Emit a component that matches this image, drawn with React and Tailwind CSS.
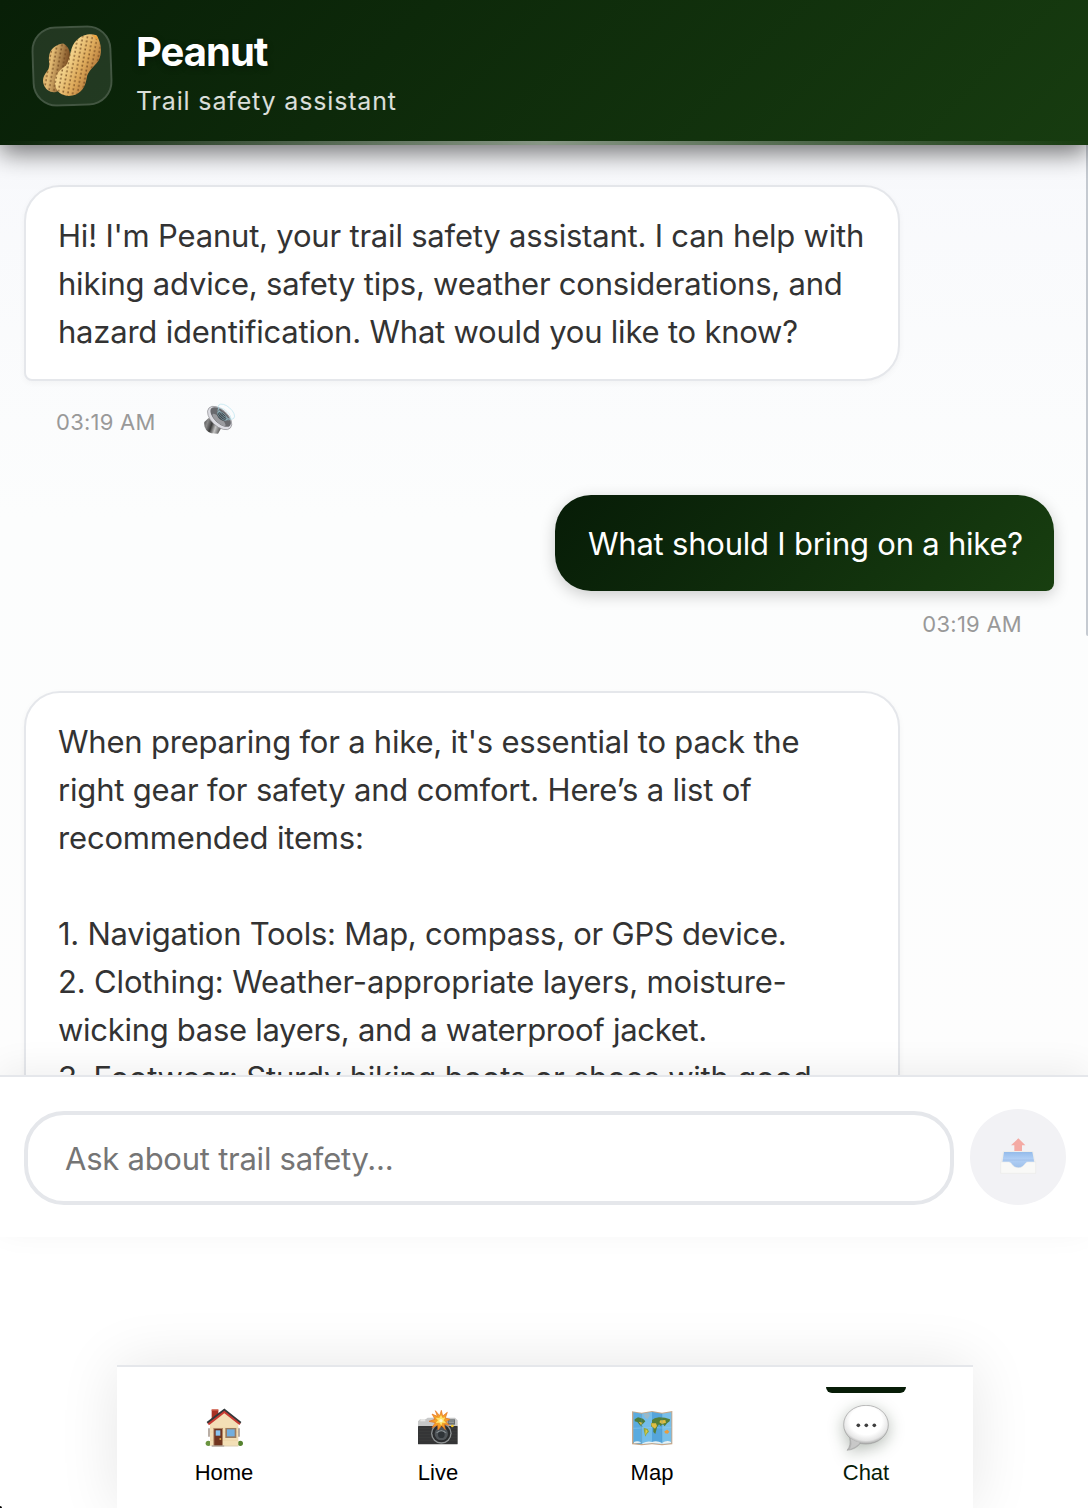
import React from "react";

function PeanutIcon() {
    return (
        <svg viewBox="36 33 240 240" className="w-full h-full">
            <defs>
                <linearGradient id="shell" x1="0" y1="0" x2="1" y2="0.7">
                    <stop offset="0" stopColor="#d9a95c" />
                    <stop offset="0.4" stopColor="#f2d189" />
                    <stop offset="0.65" stopColor="#dda95a" />
                    <stop offset="1" stopColor="#9c5c26" />
                </linearGradient>
                <linearGradient id="shellBack" x1="0" y1="0" x2="1" y2="0.4">
                    <stop offset="0" stopColor="#d0a05a" />
                    <stop offset="0.4" stopColor="#e3bb74" />
                    <stop offset="1" stopColor="#6f4119" />
                </linearGradient>
                <pattern id="pits" width="15" height="13" patternUnits="userSpaceOnUse" patternTransform="rotate(12)">
                    <rect x="4" y="3" width="5" height="7" rx="2" fill="#6b431a" opacity="0.75" />
                </pattern>
            </defs>
            <path d="M131 81C116 81 91 91 85 117C81 136 89 146 80 162C67 178 59 190 65 209C73 231 95 241 114 228C132 205 122 180 139 158C152 137 160 97 131 81Z" fill="url(#shellBack)" />
            <path d="M131 81C116 81 91 91 85 117C81 136 89 146 80 162C67 178 59 190 65 209C73 231 95 241 114 228C132 205 122 180 139 158C152 137 160 97 131 81Z" fill="url(#pits)" />
            <path d="M238 60C228 53 197 50 176 70C149 91 156 124 137 151C112 167 97 184 101 212C103 236 129 251 154 246C182 242 196 219 201 193C205 169 226 158 240 139C253 119 252 84 238 60Z" fill="url(#shell)" />
            <path d="M238 60C228 53 197 50 176 70C149 91 156 124 137 151C112 167 97 184 101 212C103 236 129 251 154 246C182 242 196 219 201 193C205 169 226 158 240 139C253 119 252 84 238 60Z" fill="url(#pits)" />
            <path d="M222 57L238 60L242 76Z" fill="#eda23a" />
        </svg>
    );
}

function SpeakerIcon() {
    return (
        <svg viewBox="42 21 96 96" className="w-8 h-8">
            <defs>
                <linearGradient id="metal" x1="0" y1="0" x2="1" y2="0.3">
                    <stop offset="0" stopColor="#4a4a4a" />
                    <stop offset="0.25" stopColor="#8a8a8a" />
                    <stop offset="0.5" stopColor="#3a3a3a" />
                    <stop offset="0.75" stopColor="#c4c4c4" />
                    <stop offset="1" stopColor="#666" />
                </linearGradient>
            </defs>
            <path d="M56 66L43 78Q40 104 64 112L84 113L96 92Z" fill="url(#metal)" />
            <ellipse cx="89" cy="66" rx="44" ry="25" transform="rotate(43 89 66)" fill="#dcdce2" stroke="#8d8e92" strokeWidth="2" />
            <ellipse cx="92" cy="63" rx="38" ry="19" transform="rotate(43 92 63)" fill="#68696d" />
            <ellipse cx="87" cy="72" rx="26" ry="8" transform="rotate(43 87 72)" fill="#9a9b9f" />
            <ellipse cx="95" cy="61" rx="16" ry="10" transform="rotate(43 95 61)" fill="#42474c" />
            <g fill="none" stroke="#a5dbe9" strokeWidth="1.8">
                <ellipse cx="97" cy="60" rx="18" ry="8" transform="rotate(41 97 60)" opacity="0.7" />
                <ellipse cx="103" cy="54" rx="24" ry="11" transform="rotate(41 103 54)" opacity="0.7" />
                <ellipse cx="109" cy="47" rx="30" ry="15" transform="rotate(41 109 47)" opacity="0.8" />
            </g>
        </svg>
    );
}

function OutboxIcon() {
    return (
        <svg viewBox="174 231 120 120" className="w-10 h-10">
            <defs>
                <linearGradient id="tray" x1="0" y1="0" x2="0" y2="1">
                    <stop offset="0" stopColor="#94bbea" />
                    <stop offset="0.45" stopColor="#b2d0f6" />
                    <stop offset="1" stopColor="#9dbfe9" />
                </linearGradient>
            </defs>
            <path d="M235 235L256 256H246V273H223V256H213Z" fill="#f4aaa4" />
            <path d="M189 273H280L287 307V340H182V307Z" fill="#eeeeec" />
            <path d="M192 276H277L283 307V325H187V307Z" fill="url(#tray)" />
            <path d="M189 300H281" stroke="#8caed8" strokeWidth="1.5" />
            <path d="M182 306H206C216 306 216 323 235 323C254 323 254 306 263 306H287V340H182Z" fill="#f9f9f7" stroke="#e9e9e6" strokeWidth="1.5" />
        </svg>
    );
}

function HomeIcon() {
    return (
        <svg viewBox="30 42 144 144" className="w-12 h-12">
            <rect x="65" y="59" width="20" height="30" fill="#a93226" />
            <rect x="65" y="58" width="20" height="4" fill="#d1604c" />
            <circle cx="55" cy="160" r="8" fill="#6b9440" />
            <circle cx="151" cy="160" r="8" fill="#55822f" />
            <path d="M60 100L103 67L145 100V167H60Z" fill="#f3dfb6" />
            <path d="M61 114H145M61 126H145M61 151H145" stroke="#e8cf9f" strokeWidth="1.5" />
            <path d="M57 115V140M147 115V140" stroke="#97867a" strokeWidth="4" />
            <path d="M52 99L103 60L152 99" fill="none" stroke="#33383a" strokeWidth="7" />
            <path d="M55 103L103 66L150 103" fill="none" stroke="#c83b32" strokeWidth="6" />
            <rect x="70" y="114" width="29" height="53" fill="#b08766" />
            <rect x="73" y="117" width="23" height="50" fill="#71351f" />
            <rect x="77" y="121" width="14" height="16" fill="#8ac4ee" />
            <circle cx="91" cy="147" r="3" fill="#d9a441" />
            <rect x="106" y="114" width="33" height="30" fill="#9a7c60" />
            <rect x="111" y="118" width="23" height="21" fill="#72aede" />
            <path d="M65 170V166H103V170Z" fill="#a89c90" />
            <path d="M103 168H145" stroke="#cbb68f" strokeWidth="2" />
        </svg>
    );
}

function CameraIcon() {
    return (
        <svg viewBox="42 42 144 144" className="w-12 h-12">
            <path d="M61 87H78L83 83H165L173 91V112H54V94Z" fill="#c7c8c8" />
            <path d="M61 87H76V94H61Z" fill="#e6e6e5" />
            <rect x="54" y="108" width="119" height="55" rx="2" fill="#343536" />
            <path d="M56 115H171M56 124H171M56 133H171M56 142H171M56 151H171" stroke="#3f4040" strokeWidth="2" />
            <rect x="143" y="88" width="22" height="16" fill="#686e6f" />
            <path d="M146 93H162M146 98H162" stroke="#b7bbb9" strokeWidth="2" />
            <circle cx="124" cy="130" r="31" fill="#8f9394" />
            <circle cx="124" cy="130" r="27" fill="#2a2c2e" />
            <circle cx="124" cy="131" r="20" fill="#505559" />
            <path d="M107 130Q124 111 141 130Q124 124 107 130" fill="#91999d" />
            <circle cx="124" cy="134" r="10" fill="#2f3438" />
            <circle cx="157" cy="108" r="4" fill="#f4c827" />
            <path d="M124 61L128 78L142 67L136 84L150 88L138 95L148 106L133 103L136 119L125 107L114 120L113 105L96 113L106 98L87 94L105 88L96 72L112 79L106 62L119 77Z" fill="#f4a128" stroke="#e5701f" strokeWidth="2" />
            <path d="M123 75L128 84L136 82L131 91L138 99L127 98L124 107L118 98L107 99L114 91L107 83L118 84Z" fill="#ffe26a" />
            <circle cx="123" cy="92" r="5" fill="#fff8cf" />
        </svg>
    );
}

function MapIcon() {
    return (
        <svg viewBox="39 42 144 144" className="w-12 h-12">
            <path d="M51 64L80 68L111 63L141 68L172 63V163L141 166L111 163L80 166L51 163Z" fill="#c8a88a" />
            <path d="M55 67L80 71V162L55 159Z" fill="#5aabdf" />
            <path d="M80 71L111 66V159L80 162Z" fill="#74bdea" />
            <path d="M111 66L141 71V162L111 159Z" fill="#55a5db" />
            <path d="M141 71L169 67V159L141 162Z" fill="#78bfe9" />
            <path d="M55 115L80 114L111 112L141 114L169 112" fill="none" stroke="#8fcdf0" strokeWidth="1.5" />
            <path d="M85 72L99 69L105 76L97 88L90 82Z" fill="#9bb8c6" />
            <path d="M59 88L69 82L84 86L91 94L84 101L79 105L83 111L75 106L67 96L59 94Z" fill="#4c7c3c" />
            <path d="M71 95L83 98L78 105Z" fill="#dfbc45" />
            <path d="M86 113L98 117L102 125L95 132L91 140L87 124Z" fill="#92a73d" />
            <path d="M92 118L98 123L91 135Z" fill="#dfce4a" />
            <path d="M111 98L111 90L119 85L132 82L150 83L165 88L164 94L156 100L149 109L144 103L137 108L132 103L126 112L121 132L115 126L115 114L108 109L108 100Z" fill="#547f38" />
            <path d="M108 100L123 100L126 108L120 116L110 109ZM136 91L151 90L153 98L141 102L133 97Z" fill="#dfbd41" />
            <path d="M148 124L157 119L163 125L158 131L150 130Z" fill="#e99d3f" />
            <path d="M57 156Q68 151 79 158L57 160ZM82 160Q99 151 111 156Q126 151 141 159Q156 149 168 156V159L141 162L111 159L82 162Z" fill="#e8f2f4" />
            <path d="M80 71V162M141 71V162" stroke="#428fbf" strokeWidth="1.5" opacity="0.6" />
        </svg>
    );
}

function ChatIcon() {
    return (
        <svg viewBox="96 102 144 144" className="w-12 h-12 overflow-visible drop-shadow-[0_4px_8px_rgba(7,29,7,0.3)]">
            <defs>
                <radialGradient id="bubble" cx="0.5" cy="0.4" r="0.6">
                    <stop offset="0.6" stopColor="#fff" />
                    <stop offset="0.85" stopColor="#e6e6e6" />
                    <stop offset="1" stopColor="#a6a6a6" />
                </radialGradient>
            </defs>
            <path d="M119 205Q124 226 111 241Q137 239 151 220Z" fill="#b5b5b5" stroke="#999" strokeWidth="1.5" />
            <ellipse cx="168" cy="164" rx="67" ry="58" fill="url(#bubble)" stroke="#9c9c9c" strokeWidth="2" />
            <path d="M121 205Q137 216 151 218Q136 232 120 237Q128 221 121 205Z" fill="#c8c8c8" />
            <g fill="#3e3e3e">
                <circle cx="145" cy="166" r="5.5" />
                <circle cx="169" cy="166" r="5.5" />
                <circle cx="193" cy="166" r="5.5" />
            </g>
        </svg>
    );
}

const greeting = [
    ["Hi! I'm Peanut, your trail safety assistant. I can help with", "tracking-[-0.2px]"],
    ["hiking advice, safety tips, weather considerations, and", "tracking-[-0.22px]"],
    ["hazard identification. What would you like to know?", "tracking-[-0.21px]"],
];

const answer = [
    ["When preparing for a hike, it's essential to pack the", "tracking-[-0.21px]"],
    ["right gear for safety and comfort. Here’s a list of", "tracking-[-0.18px]"],
    ["recommended items:", "tracking-[-0.17px]"],
    ["\u00a0", "tracking-normal"],
    ["1. Navigation Tools: Map, compass, or GPS device.", "tracking-[-0.25px]"],
    ["2. Clothing: Weather-appropriate layers, moisture-", "tracking-[-0.16px]"],
    ["wicking base layers, and a waterproof jacket.", "tracking-[-0.29px]"],
    ["3. Footwear: Sturdy hiking boots or shoes with good", "tracking-[-0.2px]"],
];

function BotBubble({ lines }) {
    return (
        <div className="w-[876px] px-8 pt-[25px] pb-[23px] bg-white border-2 border-[#e5e7eb] rounded-[36px] rounded-bl-lg shadow-[0_2px_6px_rgba(0,0,0,0.04)] text-[31px] leading-[48px] text-[#333]">
            {lines.map(([text, tracking], i) => (
                <div key={i} className={`whitespace-nowrap ${tracking}`}>{text}</div>
            ))}
        </div>
    );
}

const tabs = [
    { name: "Home", Icon: HomeIcon },
    { name: "Live", Icon: CameraIcon },
    { name: "Map", Icon: MapIcon },
    { name: "Chat", Icon: ChatIcon, active: true },
];

function App() {
    return (
        <div className="relative flex flex-col w-full h-[1508px] overflow-hidden bg-white font-['Inter',sans-serif]">

            <header className="relative z-20 flex items-start h-[145px] shrink-0 pl-8 pt-[26px] bg-linear-135 from-[#081f07] to-[#173c10] shadow-[0_8px_24px_rgba(0,0,0,0.55)]">
                <div className="w-20 h-20 -rotate-2 rounded-[24px] border-2 border-white/15 bg-white/10">
                    <PeanutIcon />
                </div>
                <div className="ml-6">
                    <h1 className="text-[40px] leading-[52px] font-bold tracking-[-1px] text-white [text-shadow:0_2px_6px_rgba(0,0,0,0.35)]">Peanut</h1>
                    <p className="mt-[3px] text-[25px] leading-[40px] font-normal tracking-[0.84px] text-white/85">Trail safety assistant</p>
                </div>
                <div className="absolute inset-x-0 bottom-0 h-1 bg-linear-to-r from-transparent via-white/50 to-transparent" />
            </header>

            <main className="relative flex-1 min-h-0 overflow-hidden px-6 pt-10 bg-linear-to-b from-[#f8f9fc] via-[#fcfdfd] via-40% to-[#fdfdfd]">
                <BotBubble lines={greeting} />
                <div className="flex items-center h-[50px] mt-4 pl-8">
                    <span className="text-[22px] tracking-[0.25px] text-[#999]">03:19 AM</span>
                    <span className="ml-12 -mt-1.5"><SpeakerIcon /></span>
                </div>

                <div className="flex flex-col items-end mt-12 pr-[10px]">
                    <div className="w-[499px] pl-[33px] pt-[25px] pb-[23px] rounded-[36px] rounded-br-lg bg-linear-135 from-[#071c07] to-[#183f10] shadow-[0_4px_16px_rgba(0,0,0,0.2)] text-[31px] leading-[48px] tracking-[-0.22px] text-white whitespace-nowrap">
                        What should I bring on a hike?
                    </div>
                    <span className="mt-[15px] mb-px mr-8 text-[22px] leading-[36px] tracking-[0.25px] text-[#999]">03:19 AM</span>
                </div>

                <div className="mt-12">
                    <BotBubble lines={answer} />
                </div>

                <div className="absolute top-0 right-0 w-0.5 h-[491px] rounded-bl bg-[#c5cad1]" />
            </main>

            <form className="relative z-10 flex items-end h-[162px] shrink-0 pl-6 pb-8 gap-4 bg-white border-t-2 border-[#e5e7eb] shadow-[0_-8px_32px_rgba(0,0,0,0.06)]">
                <input
                    type="text"
                    placeholder="Ask about trail safety..."
                    className="w-[930px] h-[94px] px-[37px] rounded-[40px] border-4 border-[#e5e7eb] bg-white text-[31px] tracking-[-0.25px] placeholder:text-[#757575] outline-none"
                />
                <button type="button" className="flex items-center justify-center w-24 h-24 rounded-full bg-[#f2f2f5]">
                    <OutboxIcon />
                </button>
            </form>

            <nav className="mt-32 ml-[117px] flex w-[856px] h-[143px] shrink-0 bg-white border-t-2 border-[#e5e7eb] shadow-[0_0_60px_rgba(0,0,0,0.1)] font-['Liberation_Sans',sans-serif]">
                {tabs.map(({ name, Icon, active }) => (
                    <button key={name} type="button" className="relative flex flex-col items-center flex-1 pt-[37px]">
                        {active && <span className="absolute top-5 w-20 h-1.5 rounded-b-md bg-[#071c07]" />}
                        <Icon />
                        <span className={`mt-[7px] text-[22px] leading-7 ${active ? "text-[#071c07]" : "text-black"}`}>{name}</span>
                    </button>
                ))}
            </nav>

            <span className="absolute bottom-0 left-0 w-0.5 h-0.5 rounded-tr-full bg-black" />
        </div>
    );
}

export default App;
